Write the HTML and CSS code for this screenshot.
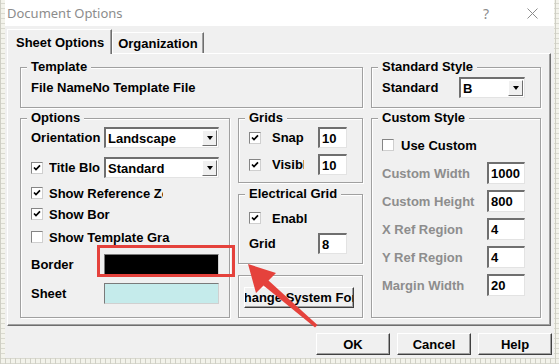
FILE: index.html
```html
<!DOCTYPE html>
<html lang="en">
<head>
    <meta charset="UTF-8">
    <meta name="viewport" content="width=device-width, initial-scale=1.0">
    <title>Document Options</title>
    <link rel="stylesheet" href="styles.css">
</head>
<body>
<div class="desk">
    <div class="window">
        <div class="titlebar">
            <span class="title">Document Options</span>
            <span class="tb-help">?</span>
            <svg class="tb-close" width="11" height="11" viewBox="0 0 11 11"><path d="M0.5 0.5L10.5 10.5M10.5 0.5L0.5 10.5" stroke="#8c8c8c" stroke-width="1"/></svg>
        </div>

        <div class="tabs">
            <div class="tab active">Sheet Options</div>
            <div class="tab">Organization</div>
        </div>

        <div class="panel">
            <fieldset class="grp template">
                <legend>Template</legend>
                <div class="file-line">File NameNo Template File</div>
            </fieldset>

            <fieldset class="grp std">
                <legend>Standard Style</legend>
                <div class="row std-row">
                    <span class="std-label">Standard</span>
                    <div class="combo std-combo"><span class="combo-text">B</span><span class="drop"><i class="tri"></i></span></div>
                </div>
            </fieldset>

            <fieldset class="grp options">
                <legend>Options</legend>
                <div class="row opt-orient">
                    <span class="opt-label">Orientation</span>
                    <div class="combo opt-combo"><span class="combo-text">Landscape</span><span class="drop"><i class="tri"></i></span></div>
                </div>
                <div class="row opt-title">
                    <span class="cb"><svg width="8" height="8" viewBox="0 0 8 8"><path d="M1 3.5L3 5.6L7 1.4" stroke="#000" stroke-width="1.7" fill="none"/></svg></span>
                    <span class="clip w-title">Title Block</span>
                    <div class="combo opt-combo"><span class="combo-text">Standard</span><span class="drop"><i class="tri"></i></span></div>
                </div>
                <div class="row opt-check opt-ref">
                    <span class="cb"><svg width="8" height="8" viewBox="0 0 8 8"><path d="M1 3.5L3 5.6L7 1.4" stroke="#000" stroke-width="1.7" fill="none"/></svg></span>
                    <span class="clip w-ref">Show Reference Zones</span>
                </div>
                <div class="row opt-check opt-bor">
                    <span class="cb"><svg width="8" height="8" viewBox="0 0 8 8"><path d="M1 3.5L3 5.6L7 1.4" stroke="#000" stroke-width="1.7" fill="none"/></svg></span>
                    <span class="clip w-bor">Show Border</span>
                </div>
                <div class="row opt-check opt-tpl">
                    <span class="cb"></span>
                    <span class="clip w-tpl">Show Template Graphics</span>
                </div>
                <div class="row opt-border">
                    <span class="opt-label">Border</span>
                    <span class="swatch swatch-border"></span>
                </div>
                <div class="row opt-sheet">
                    <span class="opt-label">Sheet</span>
                    <span class="swatch swatch-sheet"></span>
                </div>
            </fieldset>

            <div class="mid">
                <fieldset class="grp grids">
                    <legend>Grids</legend>
                    <div class="row grid-snap">
                        <span class="cb"><svg width="8" height="8" viewBox="0 0 8 8"><path d="M1 3.5L3 5.6L7 1.4" stroke="#000" stroke-width="1.7" fill="none"/></svg></span>
                        <span class="clip w-snap">Snap On</span>
                        <span class="field small">10</span>
                    </div>
                    <div class="row grid-vis">
                        <span class="cb"><svg width="8" height="8" viewBox="0 0 8 8"><path d="M1 3.5L3 5.6L7 1.4" stroke="#000" stroke-width="1.7" fill="none"/></svg></span>
                        <span class="clip w-vis">Visible</span>
                        <span class="field small">10</span>
                    </div>
                </fieldset>

                <fieldset class="grp elec">
                    <legend>Electrical Grid</legend>
                    <div class="row elec-en">
                        <span class="cb"><svg width="8" height="8" viewBox="0 0 8 8"><path d="M1 3.5L3 5.6L7 1.4" stroke="#000" stroke-width="1.7" fill="none"/></svg></span>
                        <span class="clip w-en">Enable</span>
                    </div>
                    <div class="row elec-grid">
                        <span>Grid</span>
                        <span class="field small">8</span>
                    </div>
                </fieldset>

                <div class="btngrp">
                    <button class="btn font-btn" type="button"><span>Change System Font</span></button>
                </div>
            </div>

            <fieldset class="grp custom">
                <legend>Custom Style</legend>
                <div class="row cust-use">
                    <span class="cb"></span>
                    <span>Use Custom</span>
                </div>
                <div class="row cust-row first">
                    <span class="dim">Custom Width</span>
                    <span class="field wide">1000</span>
                </div>
                <div class="row cust-row">
                    <span class="dim">Custom Height</span>
                    <span class="field wide">800</span>
                </div>
                <div class="row cust-row">
                    <span class="dim">X Ref Region</span>
                    <span class="field wide">4</span>
                </div>
                <div class="row cust-row">
                    <span class="dim">Y Ref Region</span>
                    <span class="field wide">4</span>
                </div>
                <div class="row cust-row">
                    <span class="dim">Margin Width</span>
                    <span class="field wide">20</span>
                </div>
            </fieldset>
        </div>

        <div class="actions">
            <button class="btn act" type="button">OK</button>
            <button class="btn act" type="button">Cancel</button>
            <button class="btn act" type="button">Help</button>
        </div>
    </div>

    <!-- annotation drawn over the screenshot -->
    <svg class="annot" width="559" height="364" viewBox="0 0 559 364">
        <rect x="98.5" y="246.5" width="135" height="29" fill="none" stroke="#e5423c" stroke-width="3"/>
        <polygon points="248,264 276,273 268.5,280.5 317.5,325 315,327.5 263.5,285.5 256,293" fill="#e5423c"/>
    </svg>
</div>
</body>
</html>
```

FILE: styles.css
```css
body {
    margin: 0;
    font-family: "Liberation Sans", Arial, sans-serif;
    font-size: 13px;
    font-weight: bold;
    color: #000;
}
.desk {
    position: relative;
    width: 559px;
    height: 364px;
    overflow: hidden;
    background-color: #f3f3eb;
    background-image:
        repeating-linear-gradient(90deg, #cfcfc5 0 1px, transparent 1px 5px),
        repeating-linear-gradient(0deg, #d9d9cf 0 1px, transparent 1px 5px);
}
.window {
    margin-left: 5px;
    width: 549px;
    height: 358px;
    background: #f0f0f0;
}

/* title bar */
.titlebar {
    height: 26px;
    background: #fff;
    display: flex;
    align-items: center;
    padding-left: 2px;
    font-family: "Noto Sans", sans-serif;
    font-weight: normal;
    color: #8c8c8c;
}
.title {
    flex: 1;
    font-size: 13px;
}
.tb-help {
    font-size: 14px;
    margin-right: 38px;
}
.tb-close {
    margin-right: 16px;
}

/* tabs */
.tabs {
    height: 27px;
    display: flex;
    align-items: flex-end;
    padding-left: 2px;
}
.tab {
    height: 21px;
    box-sizing: border-box;
    display: flex;
    align-items: center;
    padding: 0 5px 0 5px;
    border: 1px solid;
    border-color: #fff #6e6e6e transparent #fff;
    border-bottom: none;
    box-shadow: inset -1px 0 #a0a0a0;
}
.tab.active {
    position: relative;
    z-index: 1;
    height: 25px;
    margin-bottom: -1px;
    padding: 0 7px 0 8px;
    background: #f0f0f0;
}

/* main page */
.panel {
    height: 273px;
    box-sizing: border-box;
    margin: 0 3px 0 2px;
    border: 1px solid;
    border-color: #fff #6e6e6e #6e6e6e #fff;
    box-shadow: inset -1px -1px #a0a0a0;
    padding: 6px 9px 0 12px;
    display: grid;
    grid-template-columns: 210px 125px 170px;
    grid-template-rows: 48px 207px;
    column-gap: 8px;
    row-gap: 3px;
}
.grp {
    margin: 0;
    min-width: 0;
    padding: 0 10px;
    border: 1px solid #a0a0a0;
    box-shadow: inset 1px 1px #fff, 1px 1px #fff;
    box-sizing: border-box;
}
.grp legend {
    padding: 0 4px;
    margin-left: -4px;
    line-height: 14px;
    background: #f0f0f0;
}
.template {
    grid-column: 1 / 3;
}
.std {
    grid-column: 3;
}
.options {
    grid-column: 1;
    grid-row: 2;
}
.mid {
    grid-column: 2;
    grid-row: 2;
    display: flex;
    flex-direction: column;
}
.custom {
    grid-column: 3;
    grid-row: 2;
    padding-right: 15px;
}

.row {
    display: flex;
    align-items: center;
}
.file-line {
    margin-top: 6px;
    line-height: 16px;
}
.std-row {
    margin-top: 3px;
    height: 21px;
}
.std-label {
    width: 77px;
}

/* combo boxes */
.combo {
    box-sizing: border-box;
    height: 21px;
    background: #fff;
    border-style: solid;
    border-width: 2px 1px 1px 2px;
    border-color: #6f6f6f #e3e3e3 #e3e3e3 #6f6f6f;
    display: flex;
    align-items: center;
    padding-left: 2px;
}
.combo-text {
    flex: 1;
}
.std-combo {
    width: 66px;
}
.opt-combo {
    width: 115px;
}
.drop {
    width: 15px;
    height: 16px;
    box-sizing: border-box;
    margin-right: 1px;
    background: #f0f0f0;
    border: 1px solid;
    border-color: #fff #6e6e6e #6e6e6e #fff;
    display: flex;
    align-items: center;
    justify-content: center;
}
.tri {
    width: 0;
    height: 0;
    border-left: 3.5px solid transparent;
    border-right: 3.5px solid transparent;
    border-top: 4px solid #000;
}

/* check boxes */
.cb {
    flex: none;
    width: 12px;
    height: 12px;
    box-sizing: border-box;
    background: #fff;
    border: 1px solid;
    border-color: #858585 #cfcfcf #cfcfcf #858585;
    display: flex;
    align-items: center;
    justify-content: center;
    margin-right: 6px;
}
.clip {
    white-space: nowrap;
    overflow: hidden;
    flex: none;
}

/* options group */
.opt-label {
    width: 73px;
}
.opt-orient {
    margin-top: 2px;
    height: 21px;
}
.opt-title {
    margin-top: 9px;
    height: 21px;
}
.w-title {
    width: 51px;
    margin-right: 4px;
}
.opt-check {
    height: 14px;
}
.opt-ref {
    margin-top: 8px;
}
.w-ref {
    width: 114px;
}
.opt-bor {
    margin-top: 7px;
}
.w-bor {
    width: 61px;
}
.opt-tpl {
    margin-top: 9px;
}
.w-tpl {
    width: 121px;
}
.opt-border {
    margin-top: 10px;
    height: 21px;
}
.opt-sheet {
    margin-top: 8px;
    height: 21px;
}
.swatch {
    width: 116px;
    height: 21px;
    box-sizing: border-box;
    border: 1px solid;
    border-color: #7a7a7a #d0d0d0 #d0d0d0 #7a7a7a;
}
.swatch-border {
    background: #000;
}
.swatch-sheet {
    background: #c5ebeb;
}

/* text fields */
.field {
    box-sizing: border-box;
    height: 21px;
    background: #fff;
    border-style: solid;
    border-width: 2px 1px 1px 2px;
    border-color: #6f6f6f #e3e3e3 #e3e3e3 #6f6f6f;
    display: flex;
    align-items: center;
    padding-left: 2px;
    margin-left: auto;
}
.field.small {
    width: 29px;
}
.field.wide {
    width: 38px;
    height: 22px;
}

/* middle column */
.grids {
    height: 72px;
    padding-right: 15px;
}
.grids .cb,
.elec .cb {
    margin-right: 11px;
}
.w-snap {
    width: 35px;
}
.w-vis {
    width: 32px;
}
.w-en {
    width: 35px;
}
.grid-snap {
    margin-top: 2px;
    height: 21px;
}
.grid-vis {
    margin-top: 6px;
    height: 21px;
}
.elec {
    height: 77px;
    margin-top: 4px;
    padding-right: 15px;
}
.elec-en {
    margin-top: 10px;
    height: 14px;
}
.elec-grid {
    margin-top: 8px;
    height: 21px;
}
.btngrp {
    height: 43px;
    box-sizing: border-box;
    margin-top: 11px;
    border: 1px solid #a0a0a0;
    box-shadow: inset 1px 1px #fff, 1px 1px #fff;
    padding: 11px 8px 0 5px;
}

/* buttons */
.btn {
    font: inherit;
    color: #000;
    background: #f0f0f0;
    border: 1px solid;
    border-color: #fff #404040 #404040 #fff;
    box-shadow: inset -1px -1px #a0a0a0;
    padding: 0;
    cursor: pointer;
}
.font-btn {
    width: 110px;
    height: 21px;
    display: flex;
    align-items: center;
    justify-content: center;
    overflow: hidden;
    white-space: nowrap;
}
.font-btn span {
    flex: none;
}

/* custom style group */
.cust-use {
    margin-top: 13px;
    height: 14px;
}
.cust-use .cb {
    margin-right: 7px;
}
.cust-row {
    margin-top: 6px;
    height: 22px;
}
.cust-row.first {
    margin-top: 10px;
}
.dim {
    color: #8d8d8d;
}

/* dialog buttons */
.actions {
    display: flex;
    justify-content: flex-end;
    gap: 7px;
    margin-top: 7px;
    padding-right: 2px;
}
.act {
    width: 74px;
    height: 22px;
}

.annot {
    position: absolute;
    left: 0;
    top: 0;
    pointer-events: none;
}
```
